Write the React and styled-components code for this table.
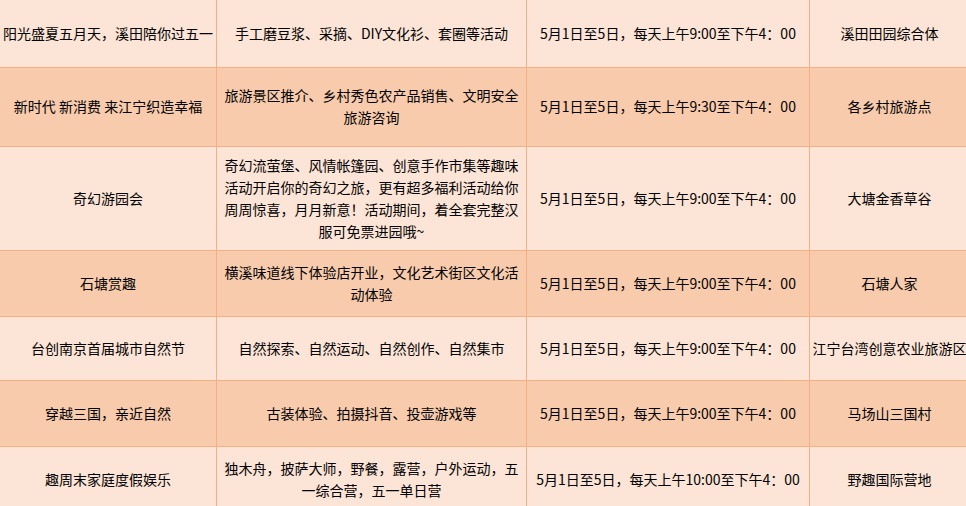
import styled, { createGlobalStyle } from "styled-components";

const GlobalStyle = createGlobalStyle`
  html, body {
    margin: 0;
    padding: 0;
    overflow: hidden;
    background: #fce4d6;
  }
`;

const Schedule = styled.div`
  margin: -1px 0 0 -1px;
  width: 970px;
  font-family: "Noto Sans CJK SC", "Microsoft YaHei", sans-serif;
  font-size: 14px;
  line-height: 22px;
  color: #000;
`;

const Row = styled.div`
  display: grid;
  grid-template-columns: 217px 310px 283px 160px;
  height: ${(p) => p.$height}px;
  box-sizing: border-box;
  border-top: 1px solid #f4b084;
  background: ${(p) => (p.$dark ? "#f8cbad" : "#fce4d6")};
`;

const Cell = styled.div`
  display: flex;
  align-items: center;
  justify-content: center;
  text-align: center;
  box-sizing: border-box;
  border-left: 1px solid #f4b084;
  padding: ${(p) => (p.$wrap ? "0 6px 2px" : "0 0 2px")};
  white-space: ${(p) => (p.$wrap ? "normal" : "nowrap")};
  min-width: 0;
`;

const rows = [
  {
    h: 68,
    name: "阳光盛夏五月天，溪田陪你过五一",
    what: "手工磨豆浆、采摘、DIY文化衫、套圈等活动",
    time: "5月1日至5日，每天上午9:00至下午4：00",
    place: "溪田田园综合体",
  },
  {
    h: 79,
    name: "新时代 新消费 来江宁织造幸福",
    what: "旅游景区推介、乡村秀色农产品销售、文明安全旅游咨询",
    time: "5月1日至5日，每天上午9:30至下午4：00",
    place: "各乡村旅游点",
  },
  {
    h: 104,
    name: "奇幻游园会",
    what: "奇幻流萤堡、风情帐篷园、创意手作市集等趣味活动开启你的奇幻之旅，更有超多福利活动给你周周惊喜，月月新意！活动期间，着全套完整汉服可免票进园哦~",
    time: "5月1日至5日，每天上午9:00至下午4：00",
    place: "大塘金香草谷",
  },
  {
    h: 66,
    name: "石塘赏趣",
    what: "横溪味道线下体验店开业，文化艺术街区文化活动体验",
    time: "5月1日至5日，每天上午9:00至下午4：00",
    place: "石塘人家",
  },
  {
    h: 64,
    name: "台创南京首届城市自然节",
    what: "自然探索、自然运动、自然创作、自然集市",
    time: "5月1日至5日，每天上午9:00至下午4：00",
    place: "江宁台湾创意农业旅游区",
  },
  {
    h: 66,
    name: "穿越三国，亲近自然",
    what: "古装体验、拍摄抖音、投壶游戏等",
    time: "5月1日至5日，每天上午9:00至下午4：00",
    place: "马场山三国村",
  },
  {
    h: 66,
    name: "趣周末家庭度假娱乐",
    what: "独木舟，披萨大师，野餐，露营，户外运动，五一综合营，五一单日营",
    time: "5月1日至5日，每天上午10:00至下午4：00",
    place: "野趣国际营地",
  },
];

export default function App() {
  return (
    <>
      <GlobalStyle />
      <Schedule>
        {rows.map((r, i) => (
          <Row key={i} $height={r.h} $dark={i % 2 === 1}>
            <Cell>{r.name}</Cell>
            <Cell $wrap>{r.what}</Cell>
            <Cell>{r.time}</Cell>
            <Cell>{r.place}</Cell>
          </Row>
        ))}
      </Schedule>
    </>
  );
}
